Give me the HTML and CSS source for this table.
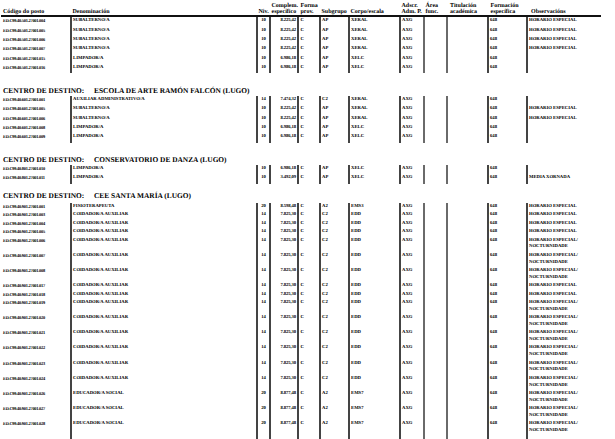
FILE: index.html
```html
<!DOCTYPE html>
<html lang="gl">
<head>
<meta charset="utf-8">
<title>Relación de postos</title>
<link rel="stylesheet" href="styles.css">
</head>
<body>
<div class="page">

<table class="grid head">
<colgroup><col class="c1"><col class="c2"><col class="c3"><col class="c4"><col class="c5"><col class="c6"><col class="c7"><col class="c8"><col class="c9"><col class="c10"><col class="c11"><col class="c12"></colgroup>
<tr>
<th class="h-code">Código do posto</th>
<th>Denominación</th>
<th>Niv.</th>
<th>Complem.<br>específico</th>
<th class="h-forma">Forma<br>prov.</th>
<th>Subgrupo</th>
<th>Corpo/escala</th>
<th>Adscr.<br>Adm. P.</th>
<th>Área<br>func.</th>
<th class="h-tit">Titulación<br>académica</th>
<th class="h-forma">Formación<br>específica</th>
<th class="h-obs">Observacións</th>
</tr>
</table>
<div class="head-rule"></div>

<table class="grid data first">
<colgroup><col class="c1"><col class="c2"><col class="c3"><col class="c4"><col class="c5"><col class="c6"><col class="c7"><col class="c8"><col class="c9"><col class="c10"><col class="c11"><col class="c12"></colgroup>
<tr><td>ED.C99.40.501.27001.004</td><td>SUBALTERNO/A</td><td class="n">10</td><td class="m">8.225,42</td><td>C</td><td>AP</td><td>XERAL</td><td>AXG</td><td></td><td></td><td>648</td><td>HORARIO ESPECIAL</td></tr>
<tr><td>ED.C99.40.501.27001.005</td><td>SUBALTERNO/A</td><td class="n">10</td><td class="m">8.225,42</td><td>C</td><td>AP</td><td>XERAL</td><td>AXG</td><td></td><td></td><td>648</td><td>HORARIO ESPECIAL</td></tr>
<tr><td>ED.C99.40.501.27001.006</td><td>SUBALTERNO/A</td><td class="n">10</td><td class="m">8.225,42</td><td>C</td><td>AP</td><td>XERAL</td><td>AXG</td><td></td><td></td><td>648</td><td>HORARIO ESPECIAL</td></tr>
<tr><td>ED.C99.40.501.27001.007</td><td>SUBALTERNO/A</td><td class="n">10</td><td class="m">8.225,42</td><td>C</td><td>AP</td><td>XERAL</td><td>AXG</td><td></td><td></td><td>648</td><td>HORARIO ESPECIAL</td></tr>
<tr><td>ED.C99.40.501.27001.015</td><td>LIMPADOR/A</td><td class="n">10</td><td class="m">6.986,18</td><td>C</td><td>AP</td><td>XELC</td><td>AXG</td><td></td><td></td><td>648</td><td></td></tr>
<tr><td>ED.C99.40.501.27001.016</td><td>LIMPADOR/A</td><td class="n">10</td><td class="m">6.986,18</td><td>C</td><td>AP</td><td>XELC</td><td>AXG</td><td></td><td></td><td>648</td><td></td></tr>
</table>

<div class="sec-head"><span class="sec-label">CENTRO DE DESTINO:</span><span>ESCOLA DE ARTE RAMÓN FALCÓN (LUGO)</span></div>
<table class="grid data">
<colgroup><col class="c1"><col class="c2"><col class="c3"><col class="c4"><col class="c5"><col class="c6"><col class="c7"><col class="c8"><col class="c9"><col class="c10"><col class="c11"><col class="c12"></colgroup>
<tr><td>ED.C99.40.601.27001.001</td><td>AUXILIAR ADMINISTRATIVO/A</td><td class="n">14</td><td class="m">7.474,32</td><td>C</td><td>C2</td><td>XERAL</td><td>AXG</td><td></td><td></td><td>648</td><td></td></tr>
<tr><td>ED.C99.40.601.27001.005</td><td>SUBALTERNO/A</td><td class="n">10</td><td class="m">8.225,42</td><td>C</td><td>AP</td><td>XERAL</td><td>AXG</td><td></td><td></td><td>648</td><td>HORARIO ESPECIAL</td></tr>
<tr><td>ED.C99.40.601.27001.006</td><td>SUBALTERNO/A</td><td class="n">10</td><td class="m">8.225,42</td><td>C</td><td>AP</td><td>XERAL</td><td>AXG</td><td></td><td></td><td>648</td><td>HORARIO ESPECIAL</td></tr>
<tr><td>ED.C99.40.601.27001.008</td><td>LIMPADOR/A</td><td class="n">10</td><td class="m">6.986,18</td><td>C</td><td>AP</td><td>XELC</td><td>AXG</td><td></td><td></td><td>648</td><td></td></tr>
<tr><td>ED.C99.40.601.27001.009</td><td>LIMPADOR/A</td><td class="n">10</td><td class="m">6.986,18</td><td>C</td><td>AP</td><td>XELC</td><td>AXG</td><td></td><td></td><td>648</td><td></td></tr>
</table>

<div class="sec-head"><span class="sec-label">CENTRO DE DESTINO:</span><span>CONSERVATORIO DE DANZA (LUGO)</span></div>
<table class="grid data">
<colgroup><col class="c1"><col class="c2"><col class="c3"><col class="c4"><col class="c5"><col class="c6"><col class="c7"><col class="c8"><col class="c9"><col class="c10"><col class="c11"><col class="c12"></colgroup>
<tr><td>ED.C99.40.801.27001.010</td><td>LIMPADOR/A</td><td class="n">10</td><td class="m">6.986,18</td><td>C</td><td>AP</td><td>XELC</td><td>AXG</td><td></td><td></td><td>648</td><td></td></tr>
<tr><td>ED.C99.40.801.27001.011</td><td>LIMPADOR/A</td><td class="n">10</td><td class="m">3.492,09</td><td>C</td><td>AP</td><td>XELC</td><td>AXG</td><td></td><td></td><td>648</td><td>MEDIA XORNADA</td></tr>
</table>

<div class="sec-head tight"><span class="sec-label">CENTRO DE DESTINO:</span><span>CEE SANTA MARÍA (LUGO)</span></div>
<table class="grid data dense">
<colgroup><col class="c1"><col class="c2"><col class="c3"><col class="c4"><col class="c5"><col class="c6"><col class="c7"><col class="c8"><col class="c9"><col class="c10"><col class="c11"><col class="c12"></colgroup>
<tr><td>ED.C99.40.901.27001.001</td><td>FISIOTERAPEUTA</td><td class="n">20</td><td class="m">8.598,48</td><td>C</td><td>A2</td><td>EMS3</td><td>AXG</td><td></td><td></td><td>648</td><td>HORARIO ESPECIAL</td></tr>
<tr><td>ED.C99.40.901.27001.003</td><td>COIDADOR/A AUXILIAR</td><td class="n">14</td><td class="m">7.825,30</td><td>C</td><td>C2</td><td>EDD</td><td>AXG</td><td></td><td></td><td>648</td><td>HORARIO ESPECIAL</td></tr>
<tr><td>ED.C99.40.901.27001.004</td><td>COIDADOR/A AUXILIAR</td><td class="n">14</td><td class="m">7.825,30</td><td>C</td><td>C2</td><td>EDD</td><td>AXG</td><td></td><td></td><td>648</td><td>HORARIO ESPECIAL</td></tr>
<tr><td>ED.C99.40.901.27001.005</td><td>COIDADOR/A AUXILIAR</td><td class="n">14</td><td class="m">7.825,30</td><td>C</td><td>C2</td><td>EDD</td><td>AXG</td><td></td><td></td><td>648</td><td>HORARIO ESPECIAL</td></tr>
<tr><td>ED.C99.40.901.27001.006</td><td>COIDADOR/A AUXILIAR</td><td class="n">14</td><td class="m">7.825,30</td><td>C</td><td>C2</td><td>EDD</td><td>AXG</td><td></td><td></td><td>648</td><td>HORARIO ESPECIAL/<br>NOCTURNIDADE</td></tr>
<tr><td>ED.C99.40.901.27001.007</td><td>COIDADOR/A AUXILIAR</td><td class="n">14</td><td class="m">7.825,30</td><td>C</td><td>C2</td><td>EDD</td><td>AXG</td><td></td><td></td><td>648</td><td>HORARIO ESPECIAL/<br>NOCTURNIDADE</td></tr>
<tr><td>ED.C99.40.901.27001.008</td><td>COIDADOR/A AUXILIAR</td><td class="n">14</td><td class="m">7.825,30</td><td>C</td><td>C2</td><td>EDD</td><td>AXG</td><td></td><td></td><td>648</td><td>HORARIO ESPECIAL/<br>NOCTURNIDADE</td></tr>
<tr><td>ED.C99.40.901.27001.017</td><td>COIDADOR/A AUXILIAR</td><td class="n">14</td><td class="m">7.825,30</td><td>C</td><td>C2</td><td>EDD</td><td>AXG</td><td></td><td></td><td>648</td><td>HORARIO ESPECIAL</td></tr>
<tr><td>ED.C99.40.901.27001.018</td><td>COIDADOR/A AUXILIAR</td><td class="n">14</td><td class="m">7.825,30</td><td>C</td><td>C2</td><td>EDD</td><td>AXG</td><td></td><td></td><td>648</td><td>HORARIO ESPECIAL</td></tr>
<tr><td>ED.C99.40.901.27001.019</td><td>COIDADOR/A AUXILIAR</td><td class="n">14</td><td class="m">7.825,30</td><td>C</td><td>C2</td><td>EDD</td><td>AXG</td><td></td><td></td><td>648</td><td>HORARIO ESPECIAL/<br>NOCTURNIDADE</td></tr>
<tr><td>ED.C99.40.901.27001.020</td><td>COIDADOR/A AUXILIAR</td><td class="n">14</td><td class="m">7.825,30</td><td>C</td><td>C2</td><td>EDD</td><td>AXG</td><td></td><td></td><td>648</td><td>HORARIO ESPECIAL/<br>NOCTURNIDADE</td></tr>
<tr><td>ED.C99.40.901.27001.021</td><td>COIDADOR/A AUXILIAR</td><td class="n">14</td><td class="m">7.825,30</td><td>C</td><td>C2</td><td>EDD</td><td>AXG</td><td></td><td></td><td>648</td><td>HORARIO ESPECIAL/<br>NOCTURNIDADE</td></tr>
<tr><td>ED.C99.40.901.27001.022</td><td>COIDADOR/A AUXILIAR</td><td class="n">14</td><td class="m">7.825,30</td><td>C</td><td>C2</td><td>EDD</td><td>AXG</td><td></td><td></td><td>648</td><td>HORARIO ESPECIAL/<br>NOCTURNIDADE</td></tr>
<tr><td>ED.C99.40.901.27001.023</td><td>COIDADOR/A AUXILIAR</td><td class="n">14</td><td class="m">7.825,30</td><td>C</td><td>C2</td><td>EDD</td><td>AXG</td><td></td><td></td><td>648</td><td>HORARIO ESPECIAL/<br>NOCTURNIDADE</td></tr>
<tr><td>ED.C99.40.901.27001.024</td><td>COIDADOR/A AUXILIAR</td><td class="n">14</td><td class="m">7.825,30</td><td>C</td><td>C2</td><td>EDD</td><td>AXG</td><td></td><td></td><td>648</td><td>HORARIO ESPECIAL/<br>NOCTURNIDADE</td></tr>
<tr><td>ED.C99.40.901.27001.026</td><td>EDUCADOR/A SOCIAL</td><td class="n">20</td><td class="m">8.877,48</td><td>C</td><td>A2</td><td>EMS7</td><td>AXG</td><td></td><td></td><td>648</td><td>HORARIO ESPECIAL/<br>NOCTURNIDADE</td></tr>
<tr><td>ED.C99.40.901.27001.027</td><td>EDUCADOR/A SOCIAL</td><td class="n">20</td><td class="m">8.877,48</td><td>C</td><td>A2</td><td>EMS7</td><td>AXG</td><td></td><td></td><td>648</td><td>HORARIO ESPECIAL/<br>NOCTURNIDADE</td></tr>
<tr><td>ED.C99.40.901.27001.028</td><td>EDUCADOR/A SOCIAL</td><td class="n">20</td><td class="m">8.877,48</td><td>C</td><td>A2</td><td>EMS7</td><td>AXG</td><td></td><td></td><td>648</td><td>HORARIO ESPECIAL/<br>NOCTURNIDADE</td></tr>
</table>

</div>
</body>
</html>
```

FILE: styles.css
```css
html, body {
  margin: 0;
  padding: 0;
  background: #ffffff;
}

body {
  color: #000000;
  font-family: "Liberation Serif", "Times New Roman", serif;
  font-weight: bold;
  text-rendering: geometricPrecision;
}

.page {
  width: 615px;
  height: 439px;
  overflow: hidden;
  padding-top: 3px;
  box-sizing: border-box;
}

.grid {
  width: 600px;
  table-layout: fixed;
  border-collapse: collapse;
}

.c1 { width: 71px; }
.c2 { width: 186px; }
.c3 { width: 13px; }
.c4 { width: 28px; }
.c5 { width: 22px; }
.c6 { width: 29px; }
.c7 { width: 51px; }
.c8 { width: 24px; }
.c9 { width: 23px; }
.c10 { width: 41px; }
.c11 { width: 39px; }
.c12 { width: 73px; }

/* column header and its rule */
.head th {
  font-size: 6px;
  line-height: 6px;
  font-weight: bold;
  text-align: left;
  vertical-align: bottom;
  white-space: nowrap;
  padding: 0 0 0 1.5px;
}

.head .h-code { padding-left: 3px; }
.head .h-forma { padding-left: 2.5px; }
.head .h-tit { padding-left: 3px; }
.head .h-obs { padding-left: 4px; }

.head-rule {
  width: 600px;
  height: 2px;
  margin-left: 1px;
  background: #111111;
}

/* data rows */
.data td {
  font-size: 4.7px;
  line-height: 6.8px;
  padding: 1.3px 0 1.3px 1px;
  vertical-align: top;
  white-space: nowrap;
  overflow: hidden;
}

.data td + td {
  border-left: 2px solid #444444;
}

.data td:first-child {
  padding-left: 3px;
  font-size: 4.4px;
  letter-spacing: -0.25px;
}

.data td.n {
  text-align: center;
  padding-left: 0;
}

.data td.m {
  text-align: right;
  padding-right: 1px;
  padding-left: 0;
  letter-spacing: -0.1px;
}

.data td:nth-child(5) { padding-left: 1.5px; }
.data td:nth-child(9),
.data td:nth-child(10) { border-left-color: #6a6a6a; }

.dense td {
  padding-top: 0.8px;
  padding-bottom: 0.8px;
}

.dense tr:last-child td {
  padding-bottom: 6px;
}

/* section headings */
.sec-head {
  display: flex;
  margin: 12.5px 0 0 3px;
  font-size: 7.4px;
  line-height: 10px;
  font-weight: bold;
  white-space: nowrap;
}

.sec-head.tight {
  margin-top: 7.9px;
}

.sec-label {
  width: 91px;
}

.sec-head + .data {
  margin-top: -0.25px;
}

.sec-head + .dense {
  margin-top: 1.75px;
}
```
